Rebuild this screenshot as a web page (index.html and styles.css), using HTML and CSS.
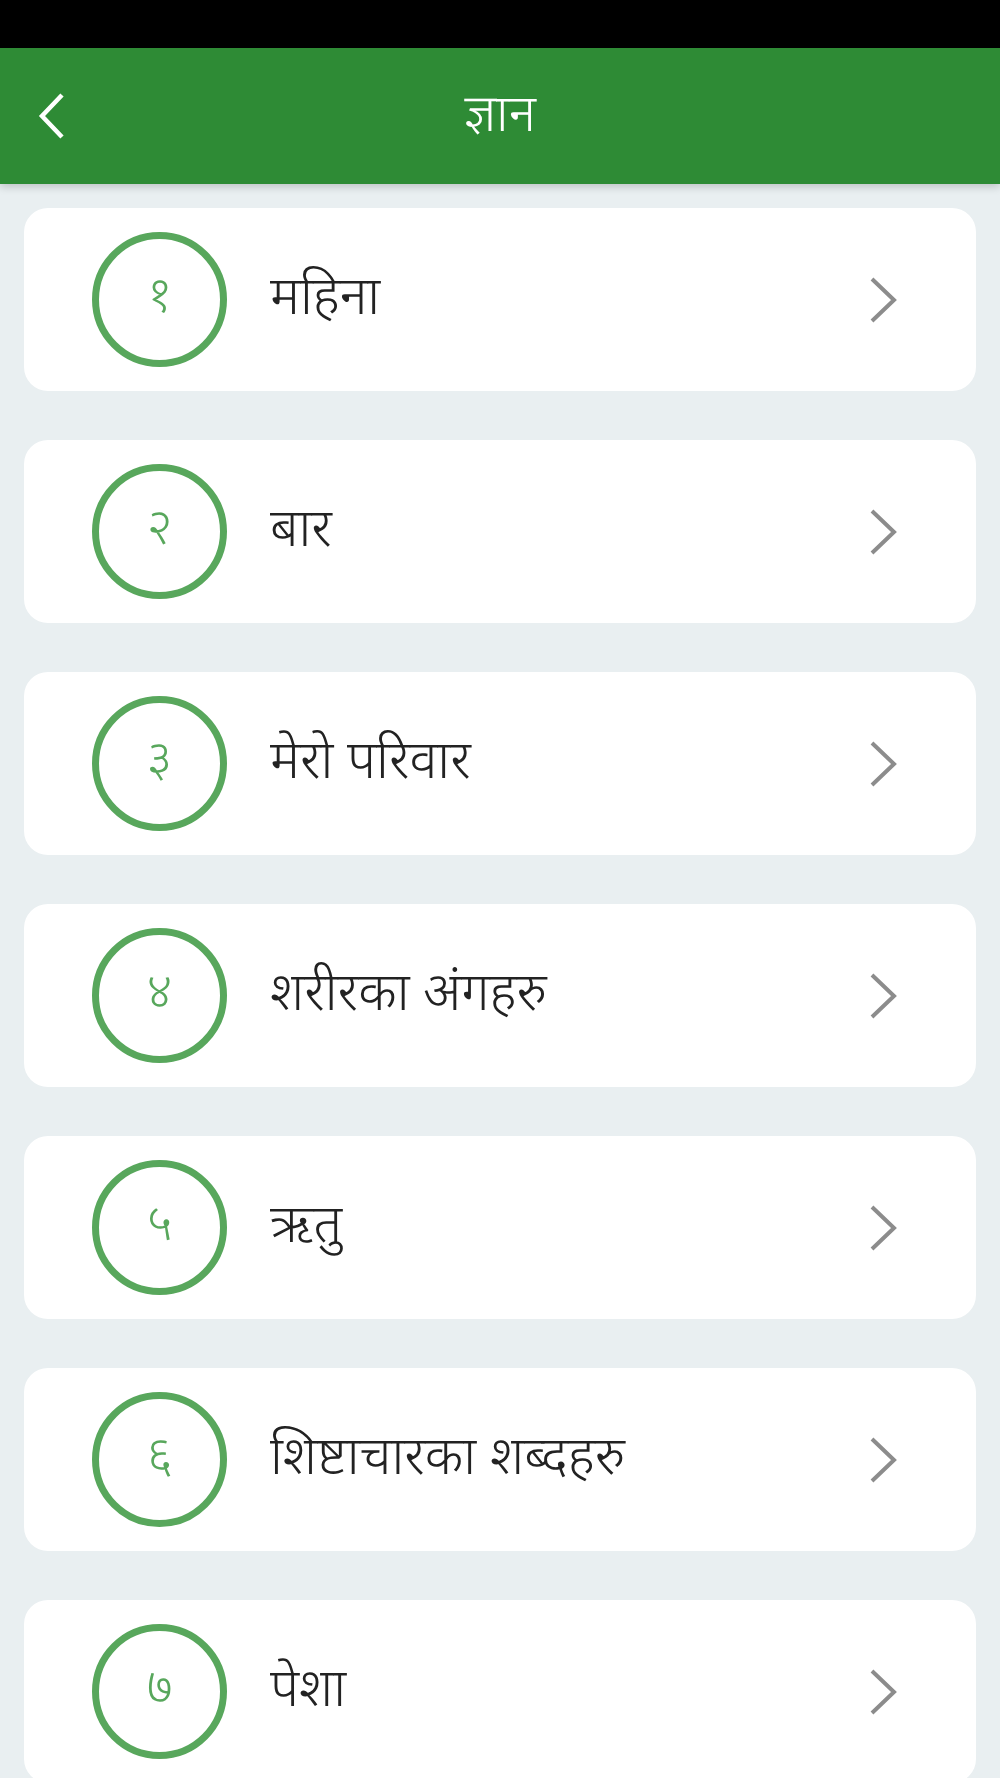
FILE: index.html
```html
<!DOCTYPE html>
<html>
<head>
    <title>ज्ञान</title>
    <link rel="stylesheet" href="styles.css">
</head>
<body>
    <div class="status-bar"></div>

    <div class="app-bar">
        <a href="#" class="back">
            <svg width="30" height="48" viewBox="0 0 30 48">
                <path d="M26 3 L6 24 L26 45" fill="none" stroke="#fff" stroke-width="4.5"/>
            </svg>
        </a>
        <h1>ज्ञान</h1>
    </div>

    <div class="list">
        <a href="#" class="item">
            <div class="num">१</div>
            <div class="label">महिना</div>
            <svg class="chev" width="30" height="48" viewBox="0 0 30 48"><path d="M3 3 L25 24 L3 45" fill="none" stroke="#8c8c8c" stroke-width="4"/></svg>
        </a>
        <a href="#" class="item">
            <div class="num">२</div>
            <div class="label">बार</div>
            <svg class="chev" width="30" height="48" viewBox="0 0 30 48"><path d="M3 3 L25 24 L3 45" fill="none" stroke="#8c8c8c" stroke-width="4"/></svg>
        </a>
        <a href="#" class="item">
            <div class="num">३</div>
            <div class="label">मेरो परिवार</div>
            <svg class="chev" width="30" height="48" viewBox="0 0 30 48"><path d="M3 3 L25 24 L3 45" fill="none" stroke="#8c8c8c" stroke-width="4"/></svg>
        </a>
        <a href="#" class="item">
            <div class="num">४</div>
            <div class="label">शरीरका अंगहरु</div>
            <svg class="chev" width="30" height="48" viewBox="0 0 30 48"><path d="M3 3 L25 24 L3 45" fill="none" stroke="#8c8c8c" stroke-width="4"/></svg>
        </a>
        <a href="#" class="item">
            <div class="num">५</div>
            <div class="label">ऋतु</div>
            <svg class="chev" width="30" height="48" viewBox="0 0 30 48"><path d="M3 3 L25 24 L3 45" fill="none" stroke="#8c8c8c" stroke-width="4"/></svg>
        </a>
        <a href="#" class="item">
            <div class="num">६</div>
            <div class="label">शिष्टाचारका शब्दहरु</div>
            <svg class="chev" width="30" height="48" viewBox="0 0 30 48"><path d="M3 3 L25 24 L3 45" fill="none" stroke="#8c8c8c" stroke-width="4"/></svg>
        </a>
        <a href="#" class="item">
            <div class="num">७</div>
            <div class="label">पेशा</div>
            <svg class="chev" width="30" height="48" viewBox="0 0 30 48"><path d="M3 3 L25 24 L3 45" fill="none" stroke="#8c8c8c" stroke-width="4"/></svg>
        </a>
    </div>
</body>
</html>
```

FILE: styles.css
```css
body {
    margin: 0;
    background: #e9eff1;
    font-family: 'Noto Sans Devanagari', 'Noto Sans', 'Lohit Devanagari', sans-serif;
    color: #222;
    overflow: hidden;
}

.status-bar {
    height: 48px;
    background: #000;
}

.app-bar {
    height: 136px;
    background: #2e8b35;
    display: flex;
    align-items: center;
    justify-content: center;
    position: relative;
    box-shadow: 0 3px 8px rgba(0, 0, 0, 0.18);
}

.app-bar .back {
    position: absolute;
    left: 36px;
    top: 44px;
    display: flex;
}

.app-bar h1 {
    margin: 0;
    color: #fff;
    font-size: 52px;
    font-weight: 350;
    padding-top: 4px;
}

.list {
    padding: 24px 24px 0;
    display: flex;
    flex-direction: column;
    gap: 49px;
}

.item {
    height: 183px;
    background: #fff;
    border-radius: 24px;
    display: flex;
    align-items: center;
    padding: 0 77px 0 68px;
    text-decoration: none;
    color: #222;
}

.num {
    width: 121px;
    height: 121px;
    border: 7px solid #58a75c;
    border-radius: 50%;
    display: flex;
    align-items: center;
    justify-content: center;
    color: #58a75c;
    font-size: 50px;
    font-weight: 350;
    flex-shrink: 0;
}

.label {
    flex: 1;
    margin-left: 43px;
    font-size: 53px;
    font-weight: 350;
    padding-top: 4px;
}

.chev {
    flex-shrink: 0;
}
```
